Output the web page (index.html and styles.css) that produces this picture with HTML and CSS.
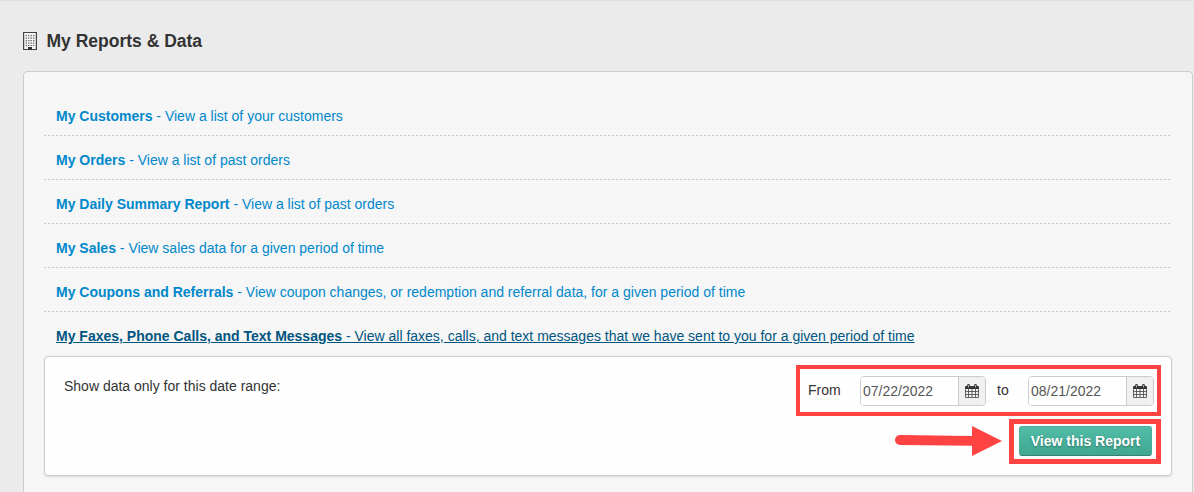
FILE: index.html
```html
<!DOCTYPE html>
<html lang="en">
	<head>
		<meta charset="UTF-8" />
		<meta name="viewport" content="width=device-width, initial-scale=1.0" />
		<title>My Reports &amp; Data</title>
		<link rel="stylesheet" href="styles.css">
	</head>
	<body>
		<svg class="icon-defs" width="0" height="0">
			<symbol id="icon-calendar" viewBox="0 0 14 14">
				<path d="M0.5 5V13.5H13.5V5M0.5 7.5H13.5M0.5 10.5H13.5M3.5 5V13.5M7 5V13.5M10.5 5V13.5" fill="none" stroke="#444" stroke-width="0.8" />
				<path d="M0 5V3Q0 2 1 2H13Q14 2 14 3V5Z" fill="#333" />
				<path d="M3.5 1.4V3.2M10.5 1.4V3.2" stroke="#333" stroke-width="2.8" stroke-linecap="round" />
				<path d="M3.5 1.2V3.4M10.5 1.2V3.4" stroke="#ccc" stroke-width="0.9" />
			</symbol>
		</svg>

		<h1 class="page-title">
			<svg class="title-icon" width="14" height="18" viewBox="0 0 14 18">
				<path d="M0.6 0.5H13.4V17.5H0.6Z" fill="#f4f4f4" stroke="#444" stroke-width="1.2" />
				<path d="M3.3 3V14M5.8 3V14M8.2 3V14M10.7 3V14" stroke="#555" stroke-width="1.2" stroke-dasharray="1.3 1.2" />
				<path d="M5 18V15H9V18Z" fill="#333" />
			</svg>
			My Reports &amp; Data
		</h1>

		<div class="panel">
			<ul class="report-list">
				<li><a href="#"><strong>My Customers</strong> - View a list of your customers</a></li>
				<li><a href="#"><strong>My Orders</strong> - View a list of past orders</a></li>
				<li><a href="#"><strong>My Daily Summary Report</strong> - View a list of past orders</a></li>
				<li><a href="#"><strong>My Sales</strong> - View sales data for a given period of time</a></li>
				<li><a href="#"><strong>My Coupons and Referrals</strong> - View coupon changes, or redemption and referral data, for a given period of time</a></li>
				<li><a href="#" class="active"><strong>My Faxes, Phone Calls, and Text Messages</strong> - View all faxes, calls, and text messages that we have sent to you for a given period of time</a></li>
			</ul>

			<form class="report-form">
				<span class="form-hint">Show data only for this date range:</span>
				<div class="form-controls">
					<div class="date-range">
						<label for="date-from">From</label>
						<div class="date-input">
							<input type="text" id="date-from" value="07/22/2022" />
							<span class="add-on"><svg width="14" height="14"><use href="#icon-calendar" /></svg></span>
						</div>
						<label for="date-to" class="label-to">to</label>
						<div class="date-input">
							<input type="text" id="date-to" value="08/21/2022" />
							<span class="add-on"><svg width="14" height="14"><use href="#icon-calendar" /></svg></span>
						</div>
					</div>
					<button type="button" class="submit-btn">View this Report</button>
				</div>
				<div class="highlight highlight-dates"></div>
				<div class="highlight highlight-submit"></div>
				<svg class="arrow" width="108" height="30" viewBox="0 0 108 30">
					<path d="M5 9L77 10V0L107 15L77 30V19.7L5 19A5 5 0 0 1 5 9Z" fill="#ff4343" />
				</svg>
			</form>
		</div>
	</body>
</html>
```

FILE: styles.css
```css
* {
	box-sizing: border-box;
}
body {
	margin: 0;
	padding-top: 30px;
	height: 492px;
	border-top: 1px solid #e0e0e0;
	background-color: #ebebeb;
	font-family: "Liberation Sans", Arial, sans-serif;
	font-size: 14px;
	line-height: 20px;
	color: #333;
}
.icon-defs {
	position: absolute;
}
.page-title {
	display: flex;
	align-items: center;
	gap: 9.5px;
	height: 20px;
	margin: 0 0 20px 23px;
	font-size: 17.5px;
	line-height: 20px;
}
.panel {
	width: 1170px;
	height: 421px;
	margin-left: 23px;
	padding: 20px 20px 0;
	border: 1px solid #ccc;
	border-bottom: none;
	border-radius: 5px 5px 0 0;
	background-color: #f6f6f6;
}
.report-list {
	margin: 0;
	padding: 0;
	list-style: none;
}
.report-list li {
	width: 1126px;
	height: 44px;
	padding: 14px 12px 10px;
	background: repeating-linear-gradient(to right, #c4c4c4 0 2px, transparent 2px 4px) bottom / 100% 1px no-repeat;
}
.report-list li:last-child {
	background: none;
}
.report-list a {
	color: #0088cc;
	text-decoration: none;
}
.report-list a.active {
	color: #005580;
	text-decoration: underline;
}
.report-form {
	position: relative;
	display: flex;
	justify-content: space-between;
	height: 120px;
	padding: 19px 17px 19px 19px;
	border: 1px solid #ccc;
	border-radius: 4px;
	background-color: #fefefe;
	box-shadow: 0 1px 2px rgba(0, 0, 0, 0.12);
}
.form-hint {
	line-height: 20px;
}
.form-controls {
	display: flex;
	flex-direction: column;
	align-items: flex-end;
	gap: 20px;
}
.date-range {
	display: flex;
	align-items: center;
}
.date-range label {
	width: 52px;
	padding-bottom: 2px;
}
.date-range .label-to {
	width: 42px;
	padding-left: 11px;
}
.date-input {
	display: flex;
	width: 126px;
	height: 30px;
	border: 1px solid #ccc;
	border-radius: 4px;
	overflow: hidden;
}
.date-input input {
	width: 97px;
	padding: 0 2px;
	border: none;
	background-color: #fff;
	font: inherit;
	color: #555;
}
.add-on {
	display: flex;
	flex: 1;
	align-items: center;
	padding-left: 6px;
	border-left: 1px solid #ccc;
	background-color: #f0f0f0;
}
.submit-btn {
	width: 133px;
	height: 30px;
	margin-right: 2px;
	padding: 0;
	border: 1px solid #4ab09b;
	border-bottom-color: #36806f;
	border-radius: 3px;
	background: linear-gradient(#51bca7, #41a790);
	color: #fff;
	font: bold 14px/20px "Liberation Sans", Arial, sans-serif;
	text-shadow: 0 1px 2px rgba(0, 0, 0, 0.35);
}
/* callouts drawn over the form */
.highlight {
	position: absolute;
	border: 4px solid #ff4343;
}
.highlight-dates {
	top: 8px;
	left: 751px;
	width: 365px;
	height: 51px;
}
.highlight-submit {
	top: 62px;
	left: 964px;
	width: 152px;
	height: 45px;
	border-width: 5px;
}
.arrow {
	position: absolute;
	top: 69px;
	left: 850px;
}
```
